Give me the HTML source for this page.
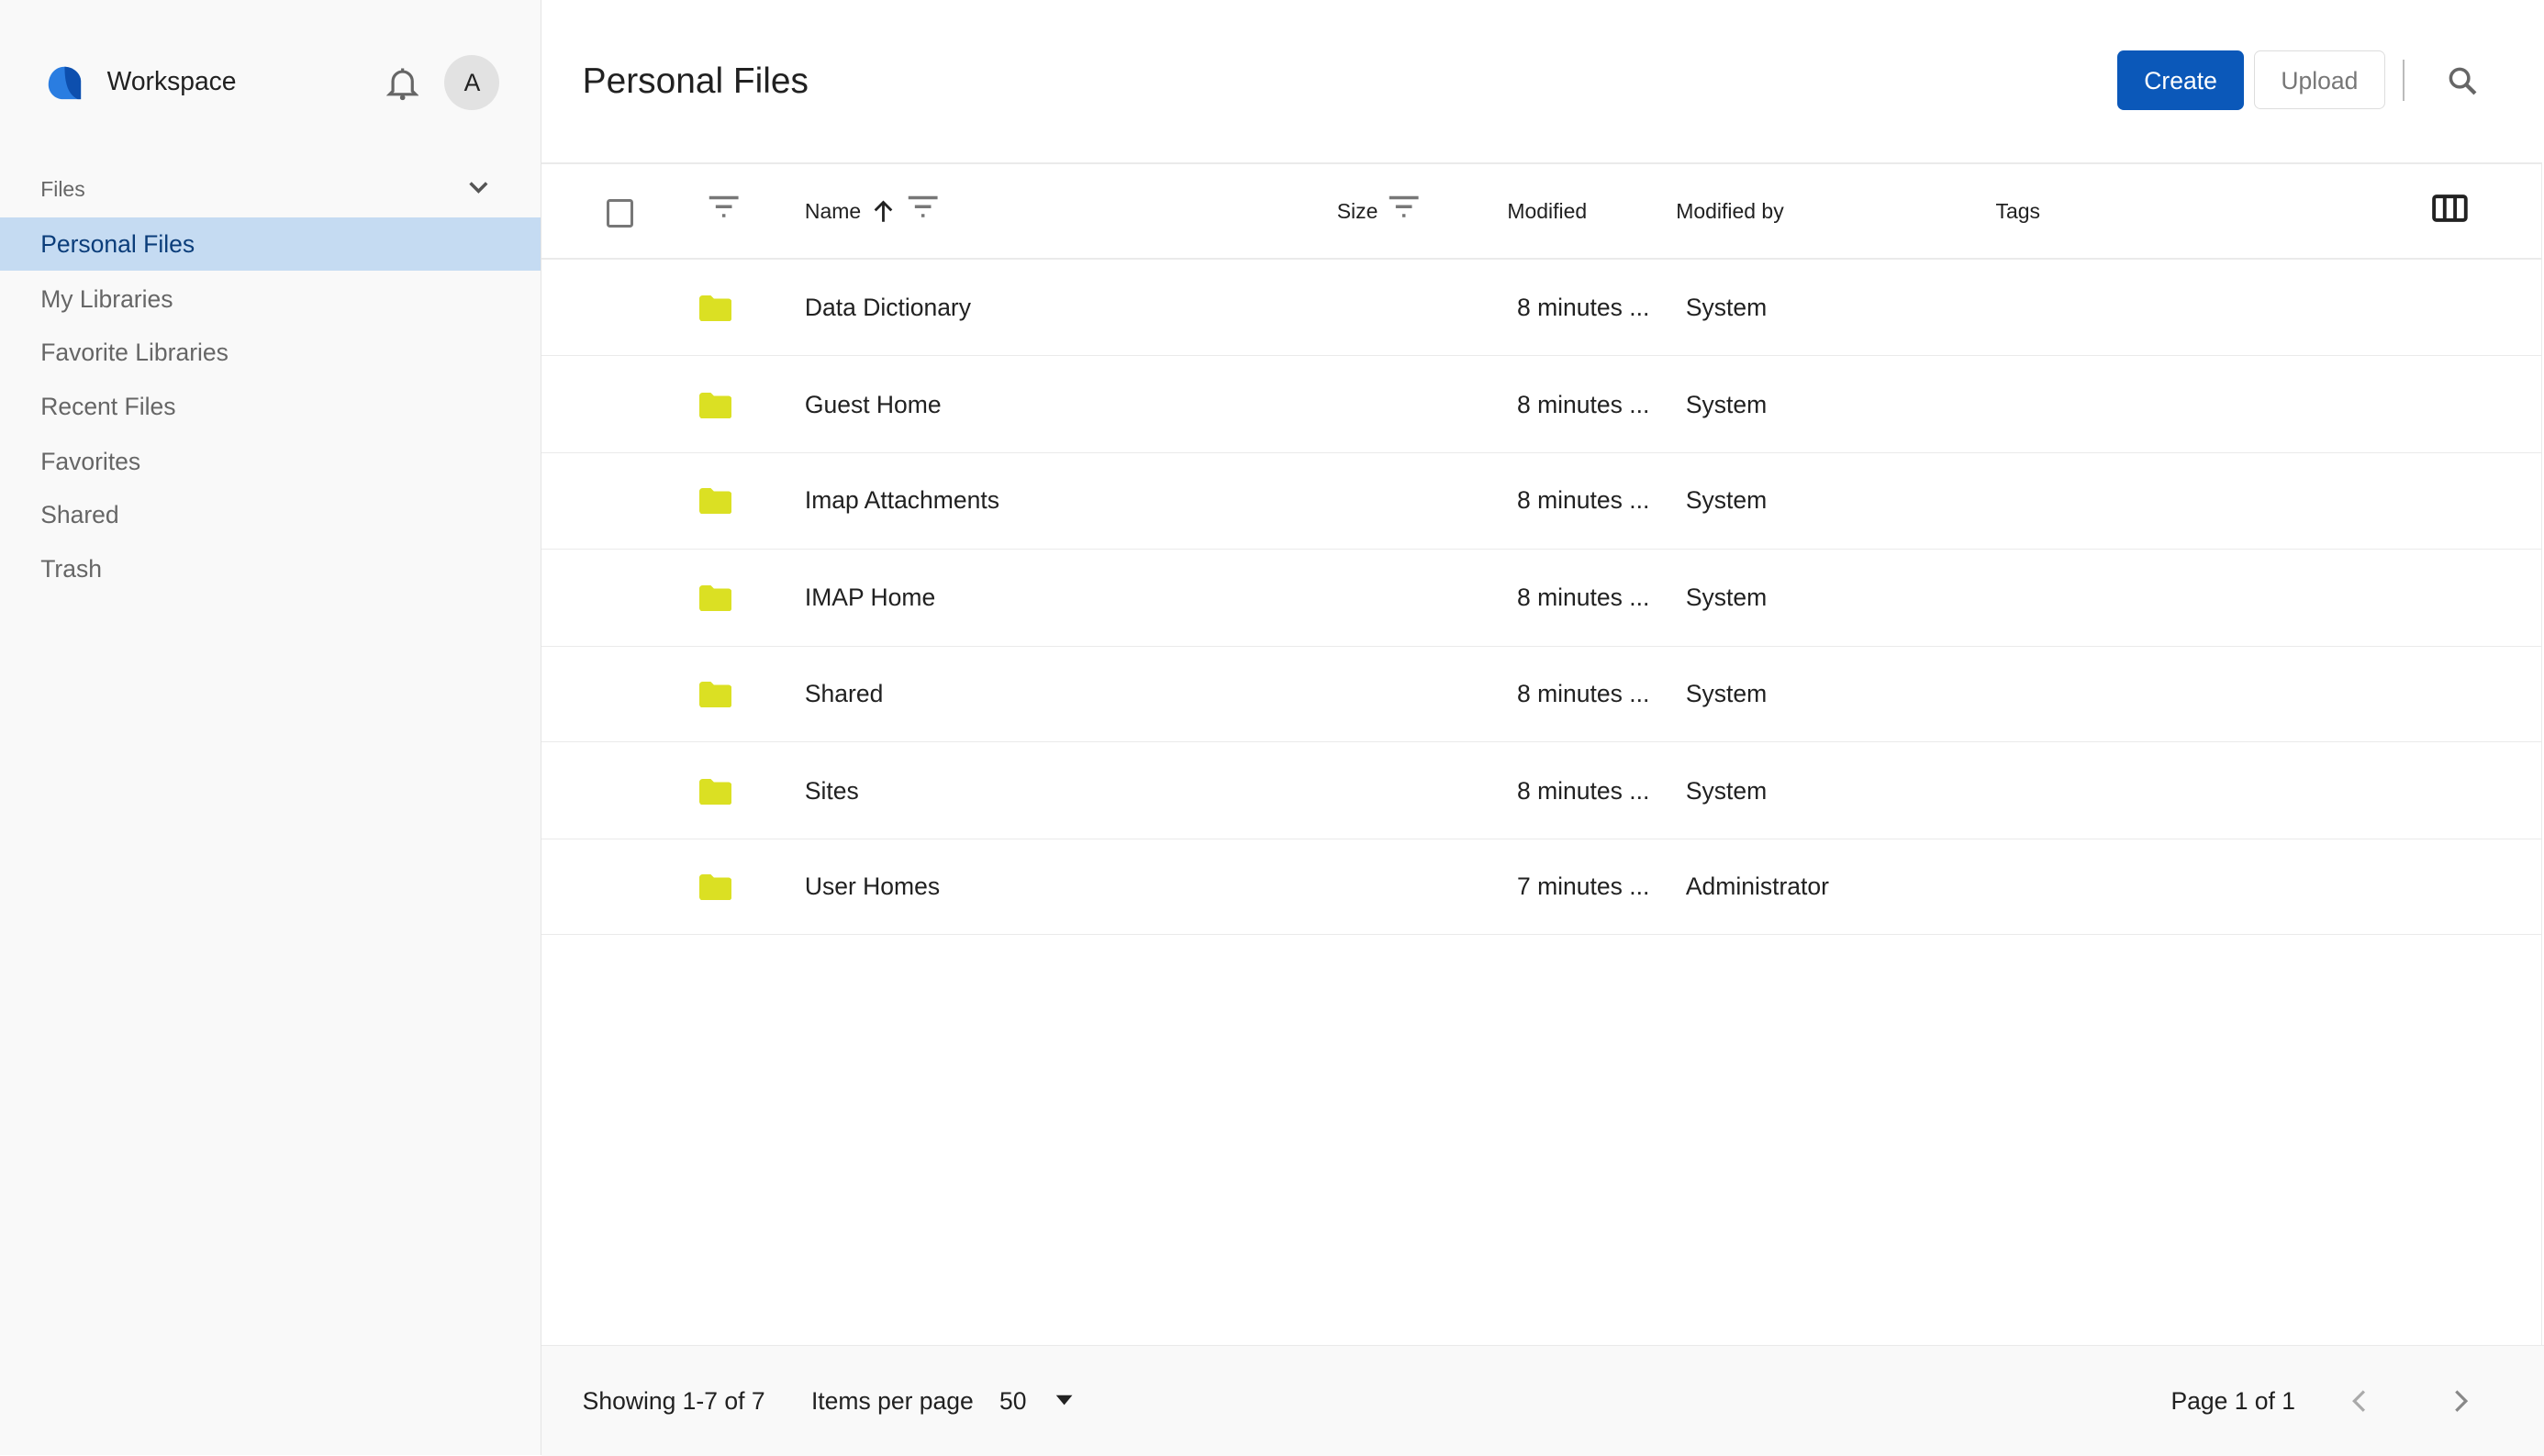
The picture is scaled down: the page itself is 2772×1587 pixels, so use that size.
<!DOCTYPE html>
<html><head><meta charset="utf-8"><style>
html,body{margin:0;padding:0;}
body{width:1568px;height:897px;zoom:1.7679;position:relative;overflow:hidden;background:#fff;font-family:"Liberation Sans",sans-serif;color:#212121;}
.a{position:absolute;white-space:nowrap;}
#side{position:absolute;left:0;top:0;width:333px;height:897px;background:#f9f9f9;border-right:1px solid #e4e4e4;}
.nav{position:absolute;left:25px;font-size:15px;color:#666;}
.row{position:absolute;left:334px;width:1232px;height:59px;border-bottom:1px solid #eaeaea;}
.row .f{position:absolute;left:97px;top:22px;width:20px;height:16px;}
.row .n{position:absolute;left:162px;top:21px;font-size:15px;}
.row .m{position:absolute;left:601px;top:21px;font-size:15px;}
.row .u{position:absolute;left:705px;top:21px;font-size:15px;}
.h{position:absolute;top:123px;font-size:13px;}
</style></head><body>
<div id="side">
<svg class="a" style="left:29px;top:40px" width="22" height="22" viewBox="0 0 22 22"><path d="M11 1 C5 1 1 6 1 12 C1 17 5 21 10 21 L21 21 L21 10 C21 5 16 1 11 1Z" fill="#2a7de1"/><path d="M11 1 C16 1 21 5 21 10 L21 21 L19 21 C13 18 11 11 11 1Z" fill="#0d4fae"/></svg>
<div class="a" style="left:66px;top:41px;font-size:16px;color:#212121">Workspace</div>
<svg class="a" style="left:238px;top:40px" width="20" height="22" viewBox="0 0 20 22"><path d="M10 2 v1.5 M4 16 V10 a6 6 0 0 1 12 0 V16 L18 18 H2 Z" fill="none" stroke="#666" stroke-width="1.8"/><circle cx="10" cy="20" r="1.6" fill="#666"/></svg>
<div class="a" style="left:274px;top:34px;width:34px;height:34px;border-radius:50%;background:#e2e2e2;text-align:center;line-height:34px;font-size:15px">A</div>
<div class="a" style="left:25px;top:109px;font-size:13px;color:#666">Files</div>
<svg class="a" style="left:288px;top:111px" width="14" height="10" viewBox="0 0 14 10"><path d="M2 2 L7 7 L12 2" fill="none" stroke="#555" stroke-width="2"/></svg>
<div class="a" style="left:0;top:134px;width:333px;height:33px;background:#c5dbf2"></div>
<div class="nav" style="top:142px;color:#0b3d7a">Personal Files</div>
<div class="nav" style="top:176px">My Libraries</div>
<div class="nav" style="top:209px">Favorite Libraries</div>
<div class="nav" style="top:242px">Recent Files</div>
<div class="nav" style="top:276px">Favorites</div>
<div class="nav" style="top:309px">Shared</div>
<div class="nav" style="top:342px">Trash</div>
</div>
<div class="a" style="left:359px;top:38px;font-size:22px">Personal Files</div>
<div class="a" style="left:1305px;top:31px;width:78px;height:37px;background:#0b58b9;border-radius:4px;color:#fff;font-size:15px;text-align:center;line-height:38px">Create</div>
<div class="a" style="left:1389px;top:31px;width:80px;height:35px;border:1px solid #ddd;border-radius:4px;color:#777;font-size:15px;text-align:center;line-height:37px">Upload</div>
<div class="a" style="left:1481px;top:37px;width:1px;height:25px;background:#bbb"></div>
<svg class="a" style="left:1508px;top:40px" width="20" height="20" viewBox="0 0 20 20"><circle cx="8" cy="8" r="5.5" fill="none" stroke="#666" stroke-width="2"/><path d="M12 12 L17.5 17.5" stroke="#666" stroke-width="2.4"/></svg>
<div class="a" style="left:334px;top:100px;width:1232px;height:1px;background:#eaeaea"></div>
<div class="a" style="left:1566px;top:100px;width:1px;height:730px;background:#eaeaea"></div>
<div class="a" style="left:334px;top:159px;width:1232px;height:1px;background:#eaeaea"></div>
<div class="a" style="left:374px;top:123px;width:13px;height:14px;border:2px solid #777;border-radius:2px"></div>
<svg class="a" style="left:436px;top:120px" width="20" height="16" viewBox="0 0 20 16"><path d="M1 2 H19 M5 7.5 H15 M9 13 H11" stroke="#777" stroke-width="2"/></svg>
<div class="h" style="left:496px">Name</div>
<svg class="a" style="left:538px;top:123px" width="13" height="15" viewBox="0 0 13 15"><path d="M6.5 14 V2 M1.5 7 L6.5 2 L11.5 7" fill="none" stroke="#222" stroke-width="1.6"/></svg>
<svg class="a" style="left:559px;top:120px" width="20" height="16" viewBox="0 0 20 16"><path d="M1 2 H19 M5 7.5 H15 M9 13 H11" stroke="#777" stroke-width="2"/></svg>
<div class="h" style="left:824px">Size</div>
<svg class="a" style="left:855px;top:120px" width="20" height="16" viewBox="0 0 20 16"><path d="M1 2 H19 M5 7.5 H15 M9 13 H11" stroke="#777" stroke-width="2"/></svg>
<div class="h" style="left:929px">Modified</div>
<div class="h" style="left:1033px">Modified by</div>
<div class="h" style="left:1230px">Tags</div>
<svg class="a" style="left:1499px;top:120px" width="22" height="17" viewBox="0 0 22 17"><rect x="1.2" y="1.2" width="19.6" height="14.6" rx="1.5" fill="none" stroke="#222" stroke-width="2.2"/><path d="M7.8 1 V16 M14.2 1 V16" stroke="#222" stroke-width="2.2"/></svg>

<div class="row" style="top:160px"><svg class="f" viewBox="0 0 20 16"><path d="M0 2 a2 2 0 0 1 2-2 H7 L9 2 H18 a2 2 0 0 1 2 2 V14 a2 2 0 0 1-2 2 H2 a2 2 0 0 1-2-2Z" fill="#dbe023"/></svg><div class="n">Data Dictionary</div><div class="m">8 minutes ...</div><div class="u">System</div></div>
<div class="row" style="top:220px"><svg class="f" viewBox="0 0 20 16"><path d="M0 2 a2 2 0 0 1 2-2 H7 L9 2 H18 a2 2 0 0 1 2 2 V14 a2 2 0 0 1-2 2 H2 a2 2 0 0 1-2-2Z" fill="#dbe023"/></svg><div class="n">Guest Home</div><div class="m">8 minutes ...</div><div class="u">System</div></div>
<div class="row" style="top:279px"><svg class="f" viewBox="0 0 20 16"><path d="M0 2 a2 2 0 0 1 2-2 H7 L9 2 H18 a2 2 0 0 1 2 2 V14 a2 2 0 0 1-2 2 H2 a2 2 0 0 1-2-2Z" fill="#dbe023"/></svg><div class="n">Imap Attachments</div><div class="m">8 minutes ...</div><div class="u">System</div></div>
<div class="row" style="top:339px"><svg class="f" viewBox="0 0 20 16"><path d="M0 2 a2 2 0 0 1 2-2 H7 L9 2 H18 a2 2 0 0 1 2 2 V14 a2 2 0 0 1-2 2 H2 a2 2 0 0 1-2-2Z" fill="#dbe023"/></svg><div class="n">IMAP Home</div><div class="m">8 minutes ...</div><div class="u">System</div></div>
<div class="row" style="top:398px"><svg class="f" viewBox="0 0 20 16"><path d="M0 2 a2 2 0 0 1 2-2 H7 L9 2 H18 a2 2 0 0 1 2 2 V14 a2 2 0 0 1-2 2 H2 a2 2 0 0 1-2-2Z" fill="#dbe023"/></svg><div class="n">Shared</div><div class="m">8 minutes ...</div><div class="u">System</div></div>
<div class="row" style="top:458px"><svg class="f" viewBox="0 0 20 16"><path d="M0 2 a2 2 0 0 1 2-2 H7 L9 2 H18 a2 2 0 0 1 2 2 V14 a2 2 0 0 1-2 2 H2 a2 2 0 0 1-2-2Z" fill="#dbe023"/></svg><div class="n">Sites</div><div class="m">8 minutes ...</div><div class="u">System</div></div>
<div class="row" style="top:517px"><svg class="f" viewBox="0 0 20 16"><path d="M0 2 a2 2 0 0 1 2-2 H7 L9 2 H18 a2 2 0 0 1 2 2 V14 a2 2 0 0 1-2 2 H2 a2 2 0 0 1-2-2Z" fill="#dbe023"/></svg><div class="n">User Homes</div><div class="m">7 minutes ...</div><div class="u">Administrator</div></div>

<div class="a" style="left:334px;top:829px;width:1234px;height:68px;background:#f9f9f9;border-top:1px solid #eaeaea"></div>
<div class="a" style="left:359px;top:855px;font-size:15px">Showing 1-7 of 7</div>
<div class="a" style="left:500px;top:855px;font-size:15px">Items per page</div>
<div class="a" style="left:616px;top:855px;font-size:15px">50</div>
<svg class="a" style="left:650px;top:859px" width="12" height="8" viewBox="0 0 12 8"><path d="M1 1 H11 L6 7Z" fill="#222"/></svg>
<div class="a" style="left:1338px;top:855px;font-size:15px">Page 1 of 1</div>
<svg class="a" style="left:1448px;top:856px" width="12" height="16" viewBox="0 0 12 16"><path d="M9 2 L3 8 L9 14" fill="none" stroke="#aaa" stroke-width="1.8"/></svg>
<svg class="a" style="left:1511px;top:856px" width="12" height="16" viewBox="0 0 12 16"><path d="M3 2 L9 8 L3 14" fill="none" stroke="#888" stroke-width="1.8"/></svg>
</body></html>
